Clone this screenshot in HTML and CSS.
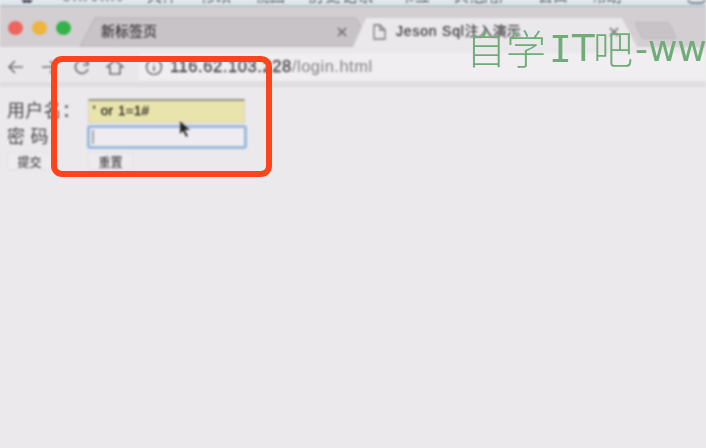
FILE: index.html
```html
<!DOCTYPE html>
<html lang="zh-CN">
<head><meta charset="utf-8"><title>Jeson Sql注入演示</title><link rel="stylesheet" href="styles.css"></head>
<body>
<div class="screen">
<header class="menubar"><svg class="apple" viewBox="0 0 14 14"><path d="M7 3C3 1 1 5 1 8s2 6 4 6l2-1 2 1c2 0 4-3 4-4-3-2-2-5 0-6-2-2-4-1-6-1Z"/></svg><nav class="menus"><b>Chrome</b><span>文件</span><span>修改</span><span>视图</span><span class="history">历史记录</span><span>书签</span><span>其他用户</span><span>窗口</span><span>帮助</span></nav><i class="status"></i></header>
<div class="tabs">
<div class="lights"><i class="red"></i><i class="yellow"></i><i class="green"></i></div>
<div class="tab inactive"><svg class="shape" viewBox="0 0 282 30" preserveAspectRatio="none"><path d="M0 30 15 1H276L282 12 274 30Z"/></svg><span>新标签页</span><svg class="close" viewBox="0 0 10 10"><path d="m1 1 8 8M9 1 1 9"/></svg></div>
<div class="tab active"><svg class="shape" viewBox="0 0 286 30" preserveAspectRatio="none"><path d="M0 30 13 1H269L284 30Z"/></svg><svg class="page" viewBox="0 0 13 16"><path d="M1 1h6l5 5v9H1ZM7 1v5h5"/></svg><span class="title"><span class="latin">Jeson Sql</span>注入演示</span><svg class="close" viewBox="0 0 10 10"><path d="m1 1 8 8M9 1 1 9"/></svg></div>
<i class="newtab"></i>
</div>
<div class="toolbar">
<svg viewBox="0 0 18 18"><path d="M16 9H2M8 3 2 9l6 6"/></svg><svg viewBox="0 0 18 18"><path d="M2 9h14M10 3l6 6-6 6"/></svg><svg viewBox="0 0 18 18"><path d="M15 11A6.5 6.5 0 1 1 14 5M15 2v5h-5"/></svg><svg viewBox="0 0 18 18"><path d="M1 9 9 2l8 7h-3v7H4V9Z"/></svg>
<div class="address"><svg viewBox="0 0 18 18"><circle cx="9" cy="9" r="7.5"/><path d="M9 8v5M9 5v1"/></svg><span class="host">116.62.103.228</span><span class="path">/login.html</span></div>
</div>
<main class="form">
<div class="row"><label>用户名：</label><div class="field filled">' or 1=1#</div></div>
<div class="row second"><label>密 码：</label><div class="field focused"><i class="caret"></i></div></div>
<div class="actions"><button>提交</button><button>重置</button></div>
</main>
<svg class="pointer" viewBox="0 0 12 18"><path d="M1 1v13l3-3 3 6 2-1-3-6h5Z"/></svg>
</div>
<div class="watermark"><span class="cjk">自学</span><span class="serifed">I</span><span class="sans tee">T</span><span class="cjk">吧</span><span class="sans www">-www</span></div>
<div class="highlight"></div>
</body></html>
```
FILE: styles.css
```css
* { box-sizing: border-box; }
body { margin: 0; width: 706px; height: 448px; overflow: hidden; position: relative; background: #ebe9eb; font-family: "Liberation Sans", "Noto Sans CJK SC", sans-serif; color: #5d5a5d; }
.screen { height: 448px; filter: blur(.8px); }
.menubar { height: 7px; background: #dfe7ee; border-bottom: 2px solid #b9c1ca; position: relative; overflow: hidden; }
.apple { position: absolute; left: 20px; top: -11px; width: 14px; height: 14px; fill: #334; }
.menus { position: absolute; left: 60px; top: -13px; height: 18px; display: flex; gap: 24px; font-size: 15px; line-height: 18px; white-space: nowrap; color: #363b42; }
.menus b { width: 63px; font-size: 17px; }
.history { width: 67px; letter-spacing: 1.5px; }
.status { position: absolute; right: 0; top: -12px; width: 19px; height: 16px; border: 2px solid #7b838c; border-radius: 5px; }
.tabs { height: 40px; background: #d2ced2; padding-top: 10px; display: flex; }
.lights { width: 80px; flex: none; padding: 4px 0 0 8px; display: flex; gap: 9px; }
.lights i { width: 15px; height: 14px; border-radius: 50%; }
.red { background: #ed655d; }
.yellow { background: #efb43d; }
.green { background: #36b24a; }
.tab { height: 30px; flex: none; position: relative; display: flex; align-items: center; font-size: 14px; color: #353135; white-space: nowrap; }
.tab span, .tab .page, .tab .close { position: relative; }
.inactive > span { line-height: 20px; padding-bottom: 2px; -webkit-text-stroke: .2px; }
.shape { position: absolute; inset: 0; width: 100%; height: 100%; }
.close { width: 10px; height: 10px; fill: none; stroke: #696569; stroke-width: 1.5; }
.inactive { width: 282px; padding: 0 15px 0 21px; justify-content: space-between; }
.inactive .shape { fill: #c8c3c7; stroke: #b7b2b6; stroke-width: 1; }
.active { width: 286px; margin-left: -9px; padding-left: 20px; gap: 10px; }
.active .shape { fill: #eae8ea; }
.title { width: 203px; line-height: 20px; padding-bottom: 2px; -webkit-text-stroke: .2px; }
.latin { letter-spacing: .8px; }
.page { width: 13px; height: 16px; fill: none; stroke: #777; stroke-width: 1.3; }
.newtab { width: 35px; height: 17px; margin: 5px 0 0 -1px; transform: skewX(25deg); background: #c8c3c7; border: 1px solid #bdb8bc; border-radius: 3px; }
.toolbar { height: 40px; background: #e9e7e9; border-bottom: 5px solid #dfdddf; padding: 4px 0 0 7px; display: flex; gap: 16px; align-items: center; }
.toolbar svg { width: 18px; height: 18px; margin-right: -1px; flex: none; fill: none; stroke: #777477; stroke-width: 1.7; }
.address { flex: 1; height: 27px; background: #f0eef0; display: flex; align-items: center; padding-left: 6px; font-size: 16.5px; }
.host { margin-left: 8px; color: #464346; letter-spacing: .6px; -webkit-text-stroke: .3px; }
.path { color: #858285; letter-spacing: .5px; }
.form { padding: 11px 0 0 7px; }
.row { display: flex; height: 26px; font-size: 18px; align-items: center; }
.row label { width: 81px; flex: none; white-space: nowrap; letter-spacing: .3px; line-height: 22px; color: #4d4a4d; }
.field { width: 157px; height: 24px; font-size: 13.5px; }
.filled { background: #e9e4ac; border: 1px solid #d5d2bc; border-top: 2px solid #96948a; color: #1c1a16; line-height: 19px; padding-left: 4px; word-spacing: 1px; letter-spacing: .2px; -webkit-text-stroke: .3px; }
.focused { width: 160px; margin-left: -1px; border: 3px solid #9bb9df; border-radius: 3px; background: #eeecf0; padding: 2px; }
.caret { display: block; width: 2px; height: 14px; background: #aaa6aa; }
.actions { display: flex; gap: 36px; margin-top: 2px; }
button { width: 45px; height: 18px; padding: 0; border: 1px solid #e5e2e5; background: #edebed; font: 12px/15px "Noto Sans CJK SC", sans-serif; color: #3d3a3d; -webkit-text-stroke: .1px; }
.pointer { position: absolute; left: 179px; top: 120px; width: 12px; height: 18px; fill: #222; stroke: #aaa; stroke-width: .6; }
.watermark { position: absolute; left: 466px; top: 25px; width: 240px; overflow: hidden; display: flex; height: 48px; align-items: center; white-space: nowrap; color: #6fac78; filter: blur(.5px); }
.cjk { font: 300 40px/46px "Noto Sans CJK SC", sans-serif; padding-bottom: 4px; }
.serifed { width: 23px; font: 38px/46px "DejaVu Sans Mono", monospace; margin-left: 3px; }
.sans { font: 36px/46px "DejaVu Sans", sans-serif; }
.tee { width: 21px; font-size: 37px; }
.www { margin-left: 2px; }
.highlight { position: absolute; left: 51px; top: 56px; width: 221px; height: 121px; border: 6px solid #ff431c; border-radius: 11px; }
```
